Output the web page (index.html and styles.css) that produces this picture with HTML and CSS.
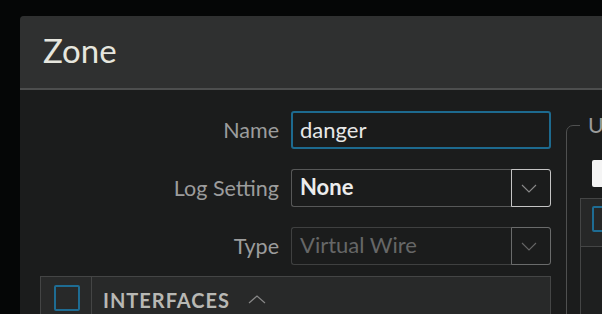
FILE: index.html
```html
<!DOCTYPE html>
<html lang="en">
<head>
    <meta charset="UTF-8">
    <meta name="viewport" content="width=device-width, initial-scale=1.0">
    <title>Zone</title>
    <link rel="stylesheet" href="styles.css">
</head>
<body>
    <div class="modal">
        <header class="modal-header">
            <h1>Zone</h1>
        </header>

        <div class="modal-body">
            <div class="main-col">
                <div class="form-row">
                    <label for="zone_name">Name</label>
                    <input type="text" id="zone_name" class="text-input" value="danger">
                </div>

                <div class="form-row">
                    <label>Log Setting</label>
                    <div class="select">
                        <span class="select-value">None</span>
                        <span class="select-arrow">
                            <svg width="16" height="9" viewBox="0 0 16 9"><path d="M1 1 L8 8 L15 1" fill="none" stroke="#8a8a8a" stroke-width="1.1"/></svg>
                        </span>
                    </div>
                </div>

                <div class="form-row">
                    <label>Type</label>
                    <div class="select disabled">
                        <span class="select-value">Virtual Wire</span>
                        <span class="select-arrow">
                            <svg width="16" height="9" viewBox="0 0 16 9"><path d="M1 1 L8 8 L15 1" fill="none" stroke="#666" stroke-width="1.1"/></svg>
                        </span>
                    </div>
                </div>

                <div class="iface-table">
                    <div class="iface-head">
                        <div class="check-cell"><span class="checkbox"></span></div>
                        <div class="head-title">
                            INTERFACES
                            <svg width="18" height="9" viewBox="0 0 18 9"><path d="M1 8 L9 1 L17 8" fill="none" stroke="#888" stroke-width="1.2"/></svg>
                        </div>
                    </div>
                    <div class="iface-rows"></div>
                </div>
            </div>

            <fieldset class="side">
                <legend>User Identification ACL</legend>
                <div class="white-box"></div>
                <div class="side-panel">
                    <div class="side-head"><span class="checkbox"></span></div>
                </div>
            </fieldset>
        </div>
    </div>
</body>
</html>
```

FILE: styles.css
```css
* {
    box-sizing: border-box;
    margin: 0;
    padding: 0;
}

body {
    background: #050606;
    font-family: 'Lato', 'Liberation Sans', sans-serif;
    overflow: hidden;
    width: 602px;
    height: 314px;
}

.modal {
    margin: 16px 0 0 20px;
    width: 800px;
    height: 400px;
    background: #1b1c1c;
    border-radius: 4px 0 0 0;
}

.modal-header {
    height: 74px;
    background: #2f3030;
    border-bottom: 2px solid #4d4e4e;
    border-radius: 4px 0 0 0;
    padding-left: 23px;
    display: flex;
    align-items: center;
}

.modal-header h1 {
    font-weight: 400;
    font-size: 33px;
    color: #e6e6de;
    margin-top: -5px;
}

.modal-body {
    display: flex;
    align-items: flex-start;
    padding-left: 20px;
}

.main-col {
    width: 511px;
    padding-top: 21px;
}

.form-row {
    display: grid;
    grid-template-columns: 239px 260px;
    column-gap: 12px;
    align-items: center;
    height: 38px;
    margin-bottom: 20px;
}

.form-row label {
    text-align: right;
    font-size: 21.5px;
    color: #9c9c9c;
}

.text-input {
    height: 38px;
    background: #1a1b1b;
    border: 2px solid #1d6a8f;
    border-radius: 3px;
    color: #e8e8e8;
    font-family: inherit;
    font-size: 22px;
    padding: 0 7px 2px;
    outline: none;
}

.select {
    height: 38px;
    display: flex;
    border: 1px solid #575858;
    border-right: none;
    border-radius: 3px;
    color: #ececec;
}

.select-value {
    flex: 1;
    padding-left: 8px;
    font-size: 22px;
    font-weight: 700;
    line-height: 34px;
}

.select-arrow {
    width: 40px;
    margin: -1px 0;
    border: 1.5px solid #c4c4c4;
    border-radius: 0 3px 3px 0;
    display: flex;
    align-items: center;
    justify-content: center;
    padding-right: 4px;
}

.select.disabled {
    border-color: #3f4040;
    color: #666767;
}

.select.disabled .select-value {
    font-weight: 400;
}

.select.disabled .select-arrow {
    border-color: #6a6b6b;
    border-width: 1px;
}

.iface-table {
    margin-top: -9px;
    border: 1px solid #444545;
    border-bottom: none;
    height: 60px;
    background: #232424;
}

.iface-head {
    display: flex;
    height: 46px;
    background: #282929;
}

.check-cell {
    width: 51px;
    border-right: 1px solid #444545;
    padding: 8px 0 0 13px;
}

.checkbox {
    display: block;
    width: 26px;
    height: 26px;
    border: 2px solid #1e6c93;
    border-radius: 2px;
}

.head-title {
    display: flex;
    align-items: center;
    gap: 18px;
    padding-left: 11px;
    height: 46px;
    font-size: 20px;
    font-weight: 700;
    letter-spacing: 1px;
    color: #b8b8b4;
    padding-bottom: 1px;
}

.side {
    margin-left: 15px;
    margin-top: 26px;
    width: 300px;
    height: 300px;
    border: 1px solid #4f5050;
    border-radius: 7px 0 0 0;
    padding-left: 13px;
}

.side legend {
    padding: 0 8px;
    font-size: 21.5px;
    line-height: 18px;
    color: #9c9c9c;
}

.white-box {
    margin: 26px 0 0 12px;
    width: 60px;
    height: 27px;
    background: #f4f4f4;
    border-radius: 2px;
}

.side-panel {
    margin-top: 11px;
    height: 200px;
    border: 1px solid #444545;
    background: #1e1f1f;
}

.side-head {
    height: 48px;
    background: #262727;
    border-bottom: 1px solid #444545;
    padding: 7px 0 0 11px;
}
```
